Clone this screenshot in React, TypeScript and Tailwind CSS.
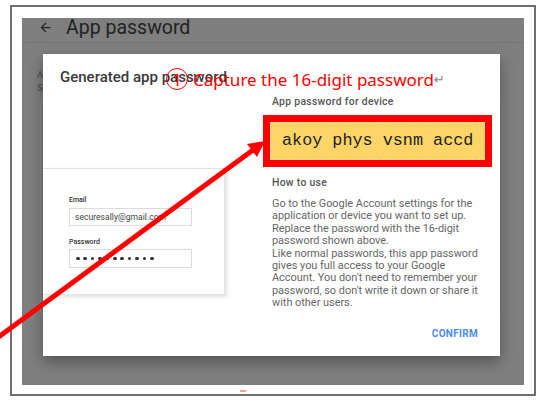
import React from "react";

const lines = [
  "Go to the Google Account settings for the",
  "application or device you want to set up.",
  "Replace the password with the 16-digit",
  "password shown above.",
  "Like normal passwords, this app password",
  "gives you full access to your Google",
  "Account. You don't need to remember your",
  "password, so don't write it down or share it",
  "with other users.",
];

export default function App() {
  return (
    <div className="relative w-[541px] h-[402px] bg-white overflow-hidden" style={{ fontFamily: "Roboto, 'Liberation Sans', sans-serif" }}>
      <div className="pt-[5px] pl-[10px]">
        <div className="w-[526px] h-[391px] border-2 border-[#6f6f6f] pt-[11px] pl-[10px]">
          <div className="relative w-[502px] h-[367px] bg-[#7f7f7f] overflow-hidden">
            {/* header */}
            <div className="h-[25px] border-b border-[#747474] flex items-start">
              <svg className="ml-[16px] mt-[2px]" width="15" height="15" viewBox="0 0 24 24">
                <path d="M20 11H7.83l5.59-5.59L12 4l-8 8 8 8 1.41-1.41L7.83 13H20v-2z" fill="#262626" />
              </svg>
              <div className="ml-[13px] text-[19.5px] leading-[20px] text-[#222]">App password</div>
            </div>
            {/* background content */}
            <div className="pl-[15px] pt-[26px] text-[9px] leading-[13px] text-[#4a4a4a]">
              <div>App</div>
              <div>Se</div>
            </div>
            <div className="ml-[18px] mt-[4px] w-[463px] h-[218px] rounded-[6px] border border-[#8b8b8b]" />

            {/* dialog */}
            <div className="absolute left-[21px] top-[36px] w-[457px] h-[302px] bg-white shadow-[0_6px_14px_rgba(0,0,0,0.35)] flex flex-col">
              <div className="h-[41px] pt-[13px] pl-[17px] text-[15px] leading-[20px] font-medium text-[#3a3a3a]">Generated app password</div>
              <div className="flex">
                <div className="w-[220px] pt-[73px]">
                  <div className="w-[182px] h-[127px] bg-white border-t border-r border-b border-[#e4e4e4] shadow-[2px_2px_4px_rgba(0,0,0,0.12)] pl-[26px] pt-[26px]">
                    <div className="text-[7px] leading-[10px] font-medium text-[#333]">Email</div>
                    <div className="mt-[3px] w-[123px] h-[18px] border border-[#dcdcdc] flex items-center pl-[5px] text-[8.6px] text-[#444] whitespace-nowrap overflow-hidden">securesally@gmail.com</div>
                    <div className="mt-[11px] text-[7px] leading-[10px] font-medium text-[#333]">Password</div>
                    <div className="mt-[2px] w-[123px] h-[19px] border border-[#dcdcdc] flex items-center pl-[6px] gap-[3.8px]">
                      {Array.from({ length: 11 }).map((_, i) => (
                        <span key={i} className="w-[3.6px] h-[3.6px] rounded-full bg-[#333]" />
                      ))}
                    </div>
                  </div>
                </div>
                <div className="w-[229px]">
                  <div className="pl-[9px] text-[10.4px] leading-[14px] font-medium text-[#555] tracking-[0.3px]">App password for device</div>
                  <div className="mt-[6px] h-[52px] border-[7px] border-[#ff0000] bg-[#fdd466] flex items-center">
                    <div className="w-full h-full border border-dashed border-[#f6e2a6] flex items-center pl-[11px] text-[16.8px] text-[#222]" style={{ fontFamily: "'Liberation Mono', 'DejaVu Sans Mono', monospace" }}>
                      akoy phys vsnm accd
                    </div>
                  </div>
                  <div className="mt-[9px] pl-[9px] text-[10.4px] leading-[14px] font-medium text-[#555] tracking-[0.3px]">How to use</div>
                  <div className="mt-[8px] pl-[9px] text-[10.9px] leading-[12.4px] text-[#666] whitespace-nowrap">
                    {lines.map((l, i) => (
                      <div key={i}>{l}</div>
                    ))}
                  </div>
                  <div className="mt-[17px] pr-[14px] text-right text-[10px] leading-[14px] font-bold text-[#4a8af4] tracking-[0.3px]">CONFIRM</div>
                </div>
              </div>
            </div>
          </div>
        </div>
      </div>

      {/* annotation */}
      <div className="absolute left-[166px] top-[68px] flex items-start text-[#ff0000]" style={{ fontFamily: "'Noto Sans', 'Noto Sans CJK JP', sans-serif" }}>
        <div className="w-[22px] h-[22px] rounded-full border border-[#ff0000] flex items-center justify-center text-[17px] leading-[17px] text-[#ff0000]">1</div>
        <div className="ml-[5px] mt-[1px] text-[17px] leading-[22px] whitespace-nowrap">Capture the 16-digit password</div>
        <div className="text-[13px] leading-[13px] text-[#888] mt-[5px]" style={{ fontFamily: "'DejaVu Sans', sans-serif" }}>↵</div>
      </div>

      <div className="absolute left-[240px] top-[390px] w-[6px] h-[2px] bg-[#f0a0a0]" />

      {/* red arrow */}
      <svg className="absolute left-0 top-0 pointer-events-none" width="541" height="402" viewBox="0 0 541 402">
        <line x1="-3" y1="338" x2="253" y2="150" stroke="#ff0000" strokeWidth="5" />
        <polygon points="265,141 257,157 247,144" fill="#ff0000" />
      </svg>
    </div>
  );
}
